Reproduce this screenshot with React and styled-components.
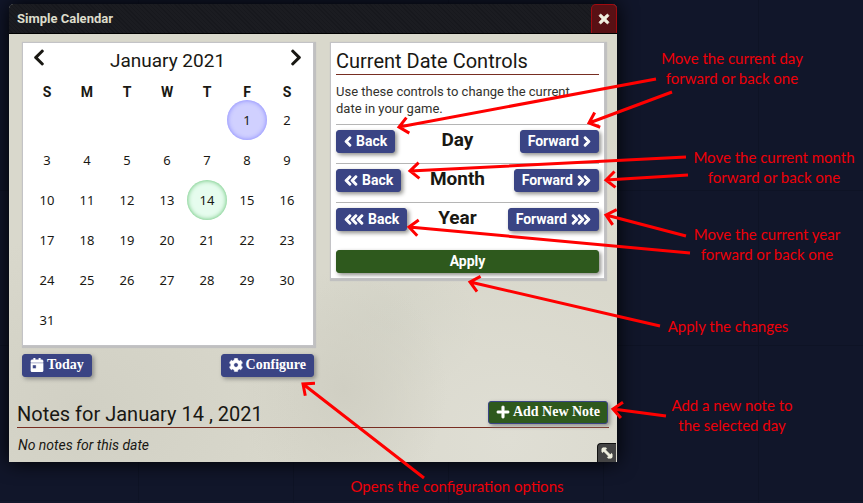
import React from "react";
import styled, { createGlobalStyle, css } from "styled-components";
import {
  FaChevronLeft,
  FaChevronRight,
  FaCalendarDay,
  FaCog,
  FaPlus,
  FaTimes,
  FaArrowsAltH,
} from "react-icons/fa";

const GlobalStyle = createGlobalStyle`
  *, *::before, *::after { box-sizing: border-box; }
  body {
    margin: 0;
    background: #11162a;
    color: #191813;
    font-family: Roboto, "Liberation Sans", sans-serif;
    font-size: 14px;
  }
`;

const Desktop = styled.main`
  position: relative;
  display: flex;
  align-items: flex-start;
  min-height: 100vh;
  padding: 4px 9px 41px;
  overflow: hidden;
  background:
    repeating-linear-gradient(90deg, transparent 0 154px, #0e1325 154px 155px) -16px 0,
    repeating-linear-gradient(180deg, transparent 0 154px, #0e1325 154px 155px) 0 36px,
    #11162a;
`;

const Window = styled.section`
  flex: 0 1 608px;
  position: relative;
  border-radius: 5px 5px 0 0;
  box-shadow: 0 0 20px #000;
  background:
    radial-gradient(ellipse at 12% 88%, #d1d0c4 0, transparent 30%),
    radial-gradient(ellipse at 55% 84%, #d0cfc3 0, transparent 22%),
    radial-gradient(ellipse at 82% 95%, #dfded4 0, transparent 28%),
    radial-gradient(ellipse at 97% 45%, #dedcd0 0, transparent 20%),
    radial-gradient(ellipse at 63% 70%, #d3d3c7 0, transparent 16%),
    #d9d8cc;
`;

const TitleBar = styled.header`
  display: flex;
  align-items: center;
  justify-content: space-between;
  height: 30px;
  padding-left: 8px;
  border-bottom: 1px solid #000;
  border-radius: 5px 5px 0 0;
  background:
    repeating-linear-gradient(45deg, transparent 0 2px, #17181d 2px 3px),
    #1b1c21;
`;

const WindowTitle = styled.h1`
  margin: 0;
  padding-bottom: 1px;
  color: #dddccb;
  font-size: 13px;
  font-weight: 700;
`;

const CloseButton = styled.button`
  display: grid;
  place-items: center;
  width: 26px;
  height: 29px;
  padding: 0;
  border: 1px solid #a10b10;
  border-bottom: 0;
  border-radius: 5px 5px 0 0;
  background: #581014;
  color: #f0f0e0;
  font-size: 14px;

  svg {
    stroke: currentColor;
    stroke-width: 30;
  }
`;

const Content = styled.div`
  padding: 8px;
`;

const Columns = styled.div`
  display: flex;
  align-items: flex-start;
  gap: 16px;
  padding: 0 4px 0 5px;
`;

const CalendarColumn = styled.div`
  flex: 0 0 292px;
`;

const panel = css`
  border: 1px solid #c3c3c6;
  background: #fff;
  box-shadow: 1px 1px 1px 1px #c0c0c0;
`;

const CalendarPanel = styled.section`
  ${panel}
  padding: 4px 6px 5px 4px;
`;

const MonthBar = styled.div`
  display: flex;
  align-items: flex-start;
  justify-content: space-between;
  height: 38px;
  padding: 0 5px 0 6px;
`;

const MonthName = styled.h2`
  margin: 0;
  padding-top: 3px;
  font-size: 19px;
  line-height: 22px;
  font-weight: 400;
`;

const MonthButton = styled.button`
  display: flex;
  padding: 1px 0;
  border: 0;
  background: none;
  color: #191813;

  svg {
    width: 12px;
    height: 19px;
  }
`;

const MonthTable = styled.table`
  width: 280px;
  border-collapse: collapse;
  table-layout: fixed;
`;

const Weekday = styled.th`
  height: 15px;
  padding: 0;
  font-size: 14px;
  line-height: 15px;
`;

const DayCell = styled.td`
  height: 40px;
  padding: 0;
`;

const marks = {
  today: css`
    background: #d0d0ff;
    box-shadow: inset 0 0 5px #8080ff;
  `,
  selected: css`
    background: #e6fcee;
    box-shadow: inset 0 0 5px #55bb66;
  `,
};

const DayButton = styled.button`
  display: block;
  width: 40px;
  height: 40px;
  padding: 0;
  border: 0;
  border-radius: 50%;
  background: none;
  color: #191813;
  font: 13px "Noto Sans", sans-serif;
  ${({ $mark }) => marks[$mark]}
`;

const Spread = styled.div`
  display: flex;
  align-items: center;
  justify-content: space-between;
`;

const CalendarActions = styled(Spread)`
  padding-top: 8px;
`;

const Button = styled.button`
  display: inline-flex;
  align-items: center;
  justify-content: center;
  gap: ${({ $serif }) => ($serif ? 3 : 4)}px;
  height: 23px;
  padding: 0 7px 1px;
  border: 1px solid #3a4484;
  border-radius: 3px;
  background: ${({ $green }) => ($green ? "#2e591d" : "#3a4484")};
  box-shadow: 2px 2px 4px #8c8c88;
  color: #fff;
  white-space: nowrap;
  font-family: ${({ $serif }) =>
    $serif ? '"Liberation Serif", serif' : 'Roboto, sans-serif'};
  font-size: 14px;
  font-weight: 700;

  svg {
    font-size: 14px;
    stroke: currentColor;
    stroke-width: 16;
  }
`;

const ApplyButton = styled(Button)`
  width: 100%;
  margin-top: 19px;
  border-color: #2e591d;
`;

const Chevrons = styled.span`
  display: flex;

  svg {
    width: 8px;
    height: 11px;
    stroke-width: 50;
  }
  svg + svg { margin-left: -2px; }
`;

const ControlsPanel = styled.section`
  ${panel}
  flex: 1;
  min-width: 0;
  padding: 5px;
`;

const SectionTitle = styled.h2`
  margin: 0;
  padding: 1px 0;
  font-size: 20px;
  line-height: 24px;
  font-weight: 400;
`;

const PanelTitle = styled(SectionTitle)`
  border-bottom: 1px solid #782e22;
`;

const Help = styled.p`
  margin: 8px 0 7px;
  padding-right: 16px;
  font-size: 13px;
  line-height: 17px;
  color: #33322d;
`;

const ControlRow = styled(Spread)`
  align-items: flex-start;
  height: 39px;
  padding-top: 5px;
  border-top: 1px solid #b5b5b5;

  &:last-of-type { height: 29px; }
`;

const Unit = styled.h3`
  margin: 0;
  font-size: 19px;
  line-height: 20px;
  font-weight: 700;
`;

const Notes = styled.section`
  padding-top: 24px;
`;

const NotesHeader = styled(Spread)`
  align-items: flex-start;
  padding-right: 1px;
  border-bottom: 1px solid #782e22;
`;

const EmptyNotes = styled.p`
  margin: 0;
  padding: 8px 0 0 1px;
  line-height: 18px;
  font-size: 14px;
  font-style: italic;
`;

const ResizeHandle = styled.button`
  position: absolute;
  right: 1px;
  bottom: 0;
  display: grid;
  place-items: center;
  width: 19px;
  height: 19px;
  padding: 0;
  border: 1px solid #111;
  border-width: 1px 0 0 1px;
  border-radius: 4px 0 0 0;
  background: #444;
  color: #f0f0e0;
  font-size: 14px;

  svg {
    transform: rotate(45deg);
    stroke: currentColor;
    stroke-width: 24;
  }
`;

const Callouts = styled.div`
  position: absolute;
  inset: 0;
  pointer-events: none;
`;

const ArrowLayer = styled.svg`
  position: absolute;
  top: 0;
  left: 0;
  fill: none;
  stroke: #f00;
  stroke-width: 3;
`;

const Callout = styled.p`
  position: absolute;
  left: ${({ $x }) => $x - 120}px;
  top: ${({ $y }) => $y - 11}px;
  width: 240px;
  margin: 0;
  text-align: center;
  font: 15px/20px Lato, sans-serif;
  color: #ee0008;
`;

const WEEKDAYS = ["S", "M", "T", "W", "T", "F", "S"];
const FIRST_WEEKDAY = 5;
const WEEKS = Array.from({ length: 6 }, (_, week) =>
  Array.from({ length: 7 }, (_, col) => {
    const day = week * 7 + col - FIRST_WEEKDAY + 1;
    return day >= 1 && day <= 31 ? day : null;
  })
);
const MARKS = { 1: "today", 14: "selected" };
const UNITS = ["Day", "Month", "Year"];

// Each arrow runs from its tip to its tail.
const ARROWS = [
  [399, 127, 656, 79],
  [589, 123, 672, 92],
  [410, 171, 686, 157],
  [606, 180, 688, 175],
  [606, 215, 686, 236],
  [409, 227, 690, 253],
  [470, 282, 660, 326],
  [613, 409, 666, 416],
  [303, 384, 424, 478],
];

const CALLOUTS = [
  [732, 59, "Move the current day", "forward or back one"],
  [774, 158, "Move the current month", "forward or back one"],
  [767, 235, "Move the current year", "forward or back one"],
  [728, 327, "Apply the changes"],
  [732, 406, "Add a new note to", "the selected day"],
  [457, 487, "Opens the configuration options"],
];

function arrowPath([x, y, tx, ty]) {
  const angle = Math.atan2(ty - y, tx - x);
  const arm = (turn) =>
    `${x + 12 * Math.cos(angle + turn)} ${y + 12 * Math.sin(angle + turn)}`;
  return `M${tx} ${ty}L${x} ${y}M${arm(0.72)}L${x} ${y}L${arm(-0.72)}`;
}

function ChevronRun({ icon: Icon, count }) {
  return (
    <Chevrons>
      {Array.from({ length: count }, (_, i) => (
        <Icon key={i} viewBox="0 0 320 512" />
      ))}
    </Chevrons>
  );
}

function Calendar() {
  return (
    <CalendarPanel>
      <MonthBar>
        <MonthButton aria-label="Previous month">
          <FaChevronLeft viewBox="0 0 320 512" />
        </MonthButton>
        <MonthName>January 2021</MonthName>
        <MonthButton aria-label="Next month">
          <FaChevronRight viewBox="0 0 320 512" />
        </MonthButton>
      </MonthBar>
      <MonthTable>
        <thead>
          <tr>
            {WEEKDAYS.map((name, i) => (
              <Weekday key={i} scope="col">{name}</Weekday>
            ))}
          </tr>
        </thead>
        <tbody>
          {WEEKS.map((week, i) => (
            <tr key={i}>
              {week.map((day, col) => (
                <DayCell key={col}>
                  {day && <DayButton $mark={MARKS[day]}>{day}</DayButton>}
                </DayCell>
              ))}
            </tr>
          ))}
        </tbody>
      </MonthTable>
    </CalendarPanel>
  );
}

function DateControls() {
  return (
    <ControlsPanel>
      <PanelTitle>Current Date Controls</PanelTitle>
      <Help>Use these controls to change the current date in your game.</Help>
      {UNITS.map((unit, i) => (
        <ControlRow key={unit}>
          <Button>
            <ChevronRun icon={FaChevronLeft} count={i + 1} />
            Back
          </Button>
          <Unit>{unit}</Unit>
          <Button>
            Forward
            <ChevronRun icon={FaChevronRight} count={i + 1} />
          </Button>
        </ControlRow>
      ))}
      <ApplyButton $green>Apply</ApplyButton>
    </ControlsPanel>
  );
}

export default function App() {
  return (
    <Desktop>
      <GlobalStyle />
      <Window>
        <TitleBar>
          <WindowTitle>Simple Calendar</WindowTitle>
          <CloseButton aria-label="Close"><FaTimes viewBox="0 0 352 512" /></CloseButton>
        </TitleBar>
        <Content>
          <Columns>
            <CalendarColumn>
              <Calendar />
              <CalendarActions>
                <Button $serif><FaCalendarDay />Today</Button>
                <Button $serif><FaCog />Configure</Button>
              </CalendarActions>
            </CalendarColumn>
            <DateControls />
          </Columns>
          <Notes>
            <NotesHeader>
              <SectionTitle>Notes for January 14 , 2021</SectionTitle>
              <Button $serif $green><FaPlus />Add New Note</Button>
            </NotesHeader>
            <EmptyNotes>No notes for this date</EmptyNotes>
          </Notes>
        </Content>
        <ResizeHandle aria-label="Resize"><FaArrowsAltH /></ResizeHandle>
      </Window>
      <Callouts>
        <ArrowLayer width="863" height="503" aria-hidden="true">
          {ARROWS.map((arrow, i) => (
            <path key={i} d={arrowPath(arrow)} />
          ))}
        </ArrowLayer>
        {CALLOUTS.map(([x, y, first, second]) => (
          <Callout key={first} $x={x} $y={y}>
            {first}
            {second && <br />}
            {second}
          </Callout>
        ))}
      </Callouts>
    </Desktop>
  );
}
